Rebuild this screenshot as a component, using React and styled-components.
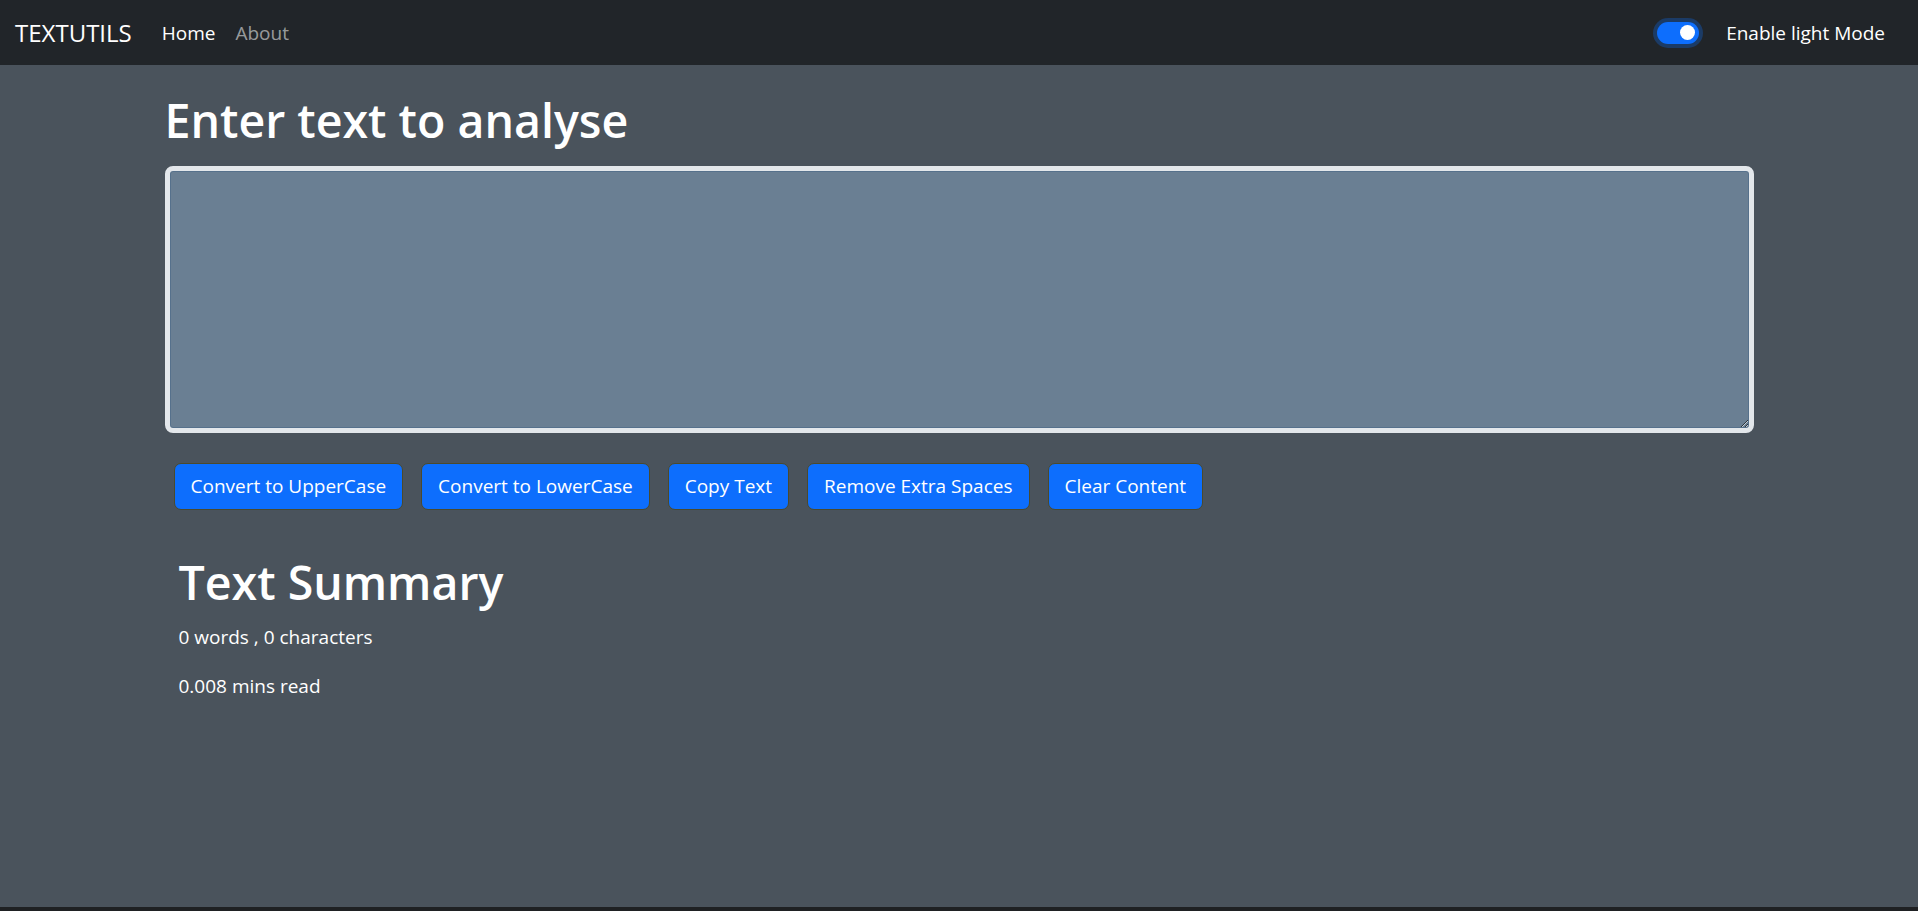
import React, { useState } from 'react';
import styled, { createGlobalStyle } from 'styled-components';

const GlobalStyle = createGlobalStyle`
  html, body { margin: 0; padding: 0; }
  body {
    background: #4a535c;
    color: #fff;
    font-family: "Open Sans", "Noto Sans", sans-serif;
    -webkit-font-smoothing: antialiased;
  }
  * { box-sizing: border-box; }
`;

const Page = styled.div`
  display: flex;
  flex-direction: column;
  min-height: 100vh;
`;

const Navbar = styled.nav`
  align-items: center;
  background: #212529;
  display: flex;
  height: 65px;
  padding: 0 33px 0 15px;
`;

const Brand = styled.a`
  color: #fff;
  font-size: 24px;
  margin-right: 30px;
  text-decoration: none;
`;

const NavLink = styled.a`
  color: ${({ active }) => (active ? '#fff' : 'rgba(255,255,255,.55)')};
  font-size: 19px;
  margin-right: 20px;
  text-decoration: none;
`;

const Spacer = styled.div`
  flex: 1;
`;

const SwitchTrack = styled.button.attrs(() => ({ type: 'button' }))`
  align-items: center;
  background: ${({ on }) => (on ? '#0d6efd' : 'transparent')};
  border: none;
  border-radius: 11px;
  box-shadow: 0 0 0 4px #1b3b66;
  cursor: pointer;
  display: flex;
  height: 22px;
  justify-content: ${({ on }) => (on ? 'flex-end' : 'flex-start')};
  margin-right: 27px;
  padding: 0 4px;
  width: 42px;
  &:focus { outline: none; }
`;

const SwitchKnob = styled.span`
  background: #fff;
  border-radius: 50%;
  display: block;
  height: 15px;
  width: 15px;
`;

const SwitchLabel = styled.label`
  color: #fff;
  font-size: 19px;
`;

const Container = styled.main`
  flex: 1;
  margin: 0 auto;
  width: 1589px;
`;

const Heading = styled.h1`
  font-size: 46.5px;
  font-weight: 600;
  line-height: 1.2;
  margin: 28px 0 17px;
`;

const TextArea = styled.textarea`
  background: #6a7f93;
  border: 5px solid #e3e7eb;
  border-radius: 8px;
  box-shadow: inset 0 0 0 1px #56718c;
  color: #fff;
  display: block;
  font-family: inherit;
  font-size: 19px;
  height: 267px;
  padding: 8px 14px;
  resize: vertical;
  width: 100%;
  &:focus { outline: none; }
`;

const ButtonRow = styled.div`
  display: flex;
  gap: 18px;
  margin-top: 30px;
  padding-left: 9px;
`;

const Button = styled.button.attrs(() => ({ type: 'button' }))`
  background: #0d6efd;
  border: 1px solid #4b4a2c;
  border-radius: 7px;
  color: #fff;
  cursor: pointer;
  font-family: inherit;
  font-size: 19px;
  height: 47px;
  padding: 0 16px;
`;

const Summary = styled.section`
  margin-top: 45px;
  padding-left: 14px;
`;

const SummaryTitle = styled.h2`
  font-size: 46.5px;
  font-weight: 600;
  line-height: 1.2;
  margin: 0 0 12px;
`;

const Stat = styled.p`
  font-size: 19px;
  line-height: 1.5;
  margin: 0 0 21px;
`;

const BottomEdge = styled.div`
  background: #1f2123;
  height: 4px;
`;

const App = () => {
  const [text, setText] = useState('');
  const [dark, setDark] = useState(true);
  const words = text.split(/\s+/).filter((w) => w.length).length;
  const readTime = words === 0 ? 0.008 : 0.008 * words;

  return (
    <Page>
      <GlobalStyle />
      <Navbar>
        <Brand href="#">TEXTUTILS</Brand>
        <NavLink href="#" active>Home</NavLink>
        <NavLink href="#">About</NavLink>
        <Spacer />
        <SwitchTrack on={dark} onClick={() => setDark(!dark)}>
          <SwitchKnob />
        </SwitchTrack>
        <SwitchLabel>Enable light Mode</SwitchLabel>
      </Navbar>
      <Container>
        <Heading>Enter text to analyse</Heading>
        <TextArea value={text} onChange={(e) => setText(e.target.value)} />
        <ButtonRow>
          <Button onClick={() => setText(text.toUpperCase())}>Convert to UpperCase</Button>
          <Button onClick={() => setText(text.toLowerCase())}>Convert to LowerCase</Button>
          <Button>Copy Text</Button>
          <Button onClick={() => setText(text.split(/[ ]+/).join(' '))}>Remove Extra Spaces</Button>
          <Button onClick={() => setText('')}>Clear Content</Button>
        </ButtonRow>
        <Summary>
          <SummaryTitle>Text Summary</SummaryTitle>
          <Stat>{words} words , {text.length} characters</Stat>
          <Stat>{Number(readTime.toFixed(3))} mins read</Stat>
        </Summary>
      </Container>
      <BottomEdge />
    </Page>
  );
};

export default App;
